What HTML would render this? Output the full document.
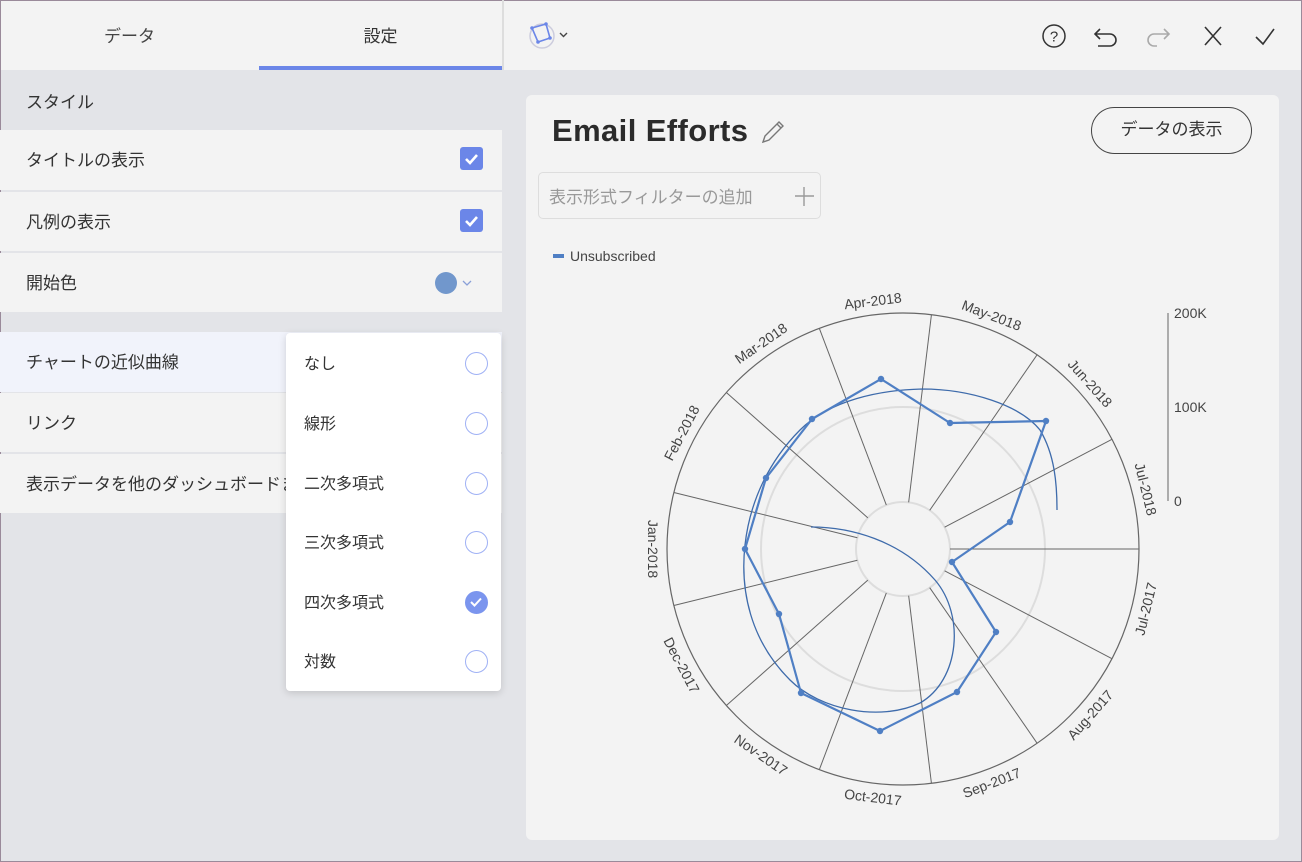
<!DOCTYPE html>
<html><head><meta charset="utf-8"><style>
*{box-sizing:border-box;margin:0;padding:0}
body{width:1302px;height:862px;overflow:hidden;background:#e3e4e8;font-family:"Liberation Sans","Noto Sans CJK JP",sans-serif;color:#333;position:relative}
.abs{position:absolute}
.row{position:absolute;left:0;width:502px;background:#f3f3f3;font-size:17px;padding-left:26px;display:flex;align-items:center;padding-bottom:3px}
.cb{position:absolute;right:19px;width:23px;height:23px;background:#6b86e8;border-radius:3px}
.item{position:absolute;left:0;width:215px;height:60px;display:flex;align-items:center;padding-left:18px;font-size:16px;color:#333;padding-bottom:3px}
.rad{position:absolute;left:179px;top:19px;width:23px;height:23px;border:1.5px solid #9fb1f5;border-radius:50%}
</style></head><body>
<div class="abs" style="left:0;top:0;width:1302px;height:70px;background:#f3f3f3;border-top:1px solid #9a8a9a"></div>
<div class="abs" style="left:0;top:0;width:1px;height:862px;background:#9a8a9a"></div>
<div class="abs" style="left:1301px;top:0;width:1px;height:862px;background:#9a8a9a"></div>
<div class="abs" style="left:0;top:861px;width:1302px;height:1px;background:#9a8a9a"></div>
<div class="abs" style="left:502px;top:0;width:2px;height:70px;background:#ddd"></div>
<div class="abs" style="left:0;top:22px;width:259px;text-align:center;font-size:17px;color:#444">データ</div>
<div class="abs" style="left:259px;top:22px;width:243px;text-align:center;font-size:17px;color:#333">設定</div>
<div class="abs" style="left:259px;top:66px;width:243px;height:4px;background:#6b86e8"></div>

<div class="abs" style="left:26px;top:88px;font-size:17px">スタイル</div>
<div class="row" style="top:130px;height:60px">タイトルの表示<div class="cb"><svg width="23" height="23"><path d="M6 12l4 4 7-8" stroke="#fff" stroke-width="2.6" fill="none"/></svg></div></div>
<div class="row" style="top:192px;height:59px">凡例の表示<div class="cb"><svg width="23" height="23"><path d="M6 12l4 4 7-8" stroke="#fff" stroke-width="2.6" fill="none"/></svg></div></div>
<div class="row" style="top:253px;height:59px">開始色<div class="abs" style="left:435px;top:19px;width:22px;height:22px;border-radius:50%;background:#7197cc"></div><svg class="abs" style="left:461px;top:25px" width="12" height="10"><path d="M2 3l4 4 4-4" stroke="#8aa0d8" fill="none" stroke-width="1.3"/></svg></div>
<div class="row" style="top:332px;height:60px;background:#f1f3fb">チャートの近似曲線</div>
<div class="row" style="top:393px;height:59px">リンク</div>
<div class="row" style="top:454px;height:59px;white-space:nowrap;overflow:hidden">表示データを他のダッシュボードまたはウェブページにリンク</div>

<div class="abs" style="left:286px;top:333px;width:215px;height:358px;background:#fff;border-radius:4px;box-shadow:0 2px 8px rgba(0,0,0,.15)">
<div class="item" style="top:0">なし<div class="rad"></div></div>
<div class="item" style="top:60px">線形<div class="rad"></div></div>
<div class="item" style="top:120px">二次多項式<div class="rad"></div></div>
<div class="item" style="top:179px">三次多項式<div class="rad"></div></div>
<div class="item" style="top:239px">四次多項式<div class="rad" style="background:#7b95ee;border-color:#7b95ee"><svg width="20" height="20" style="position:absolute;left:0;top:0"><path d="M5 10l3.5 3.5 6.5-7" stroke="#fff" stroke-width="2" fill="none"/></svg></div></div>
<div class="item" style="top:298px">対数<div class="rad"></div></div>
</div>

<svg class="abs" style="left:520px;top:14px" width="60" height="42">
<circle cx="22" cy="22" r="12" fill="none" stroke="#ccd" stroke-width="1.5"/>
<path d="M12 14l14-4 4 14-12 4z" fill="none" stroke="#6b86e8" stroke-width="1.6"/>
<circle cx="12" cy="14" r="1.8" fill="#6b86e8"/><circle cx="26" cy="10" r="1.8" fill="#6b86e8"/><circle cx="30" cy="24" r="1.8" fill="#6b86e8"/><circle cx="18" cy="28" r="1.8" fill="#6b86e8"/>
<path d="M40 19l3.5 3.5 3.5-3.5" stroke="#444" fill="none" stroke-width="1.4"/>
</svg>
<svg class="abs" style="left:1030px;top:16px" width="260" height="40">
<circle cx="24" cy="20" r="11" fill="none" stroke="#333" stroke-width="1.5"/>
<text x="24" y="25.5" text-anchor="middle" font-size="15" font-family="Liberation Sans" fill="#333">?</text>
<path d="M70 13l-5 5 5 5M65 18h15a6 6 0 0 1 0 12h-12" stroke="#333" fill="none" stroke-width="1.6"/>
<path d="M134 13l5 5-5 5M139 18h-15a6 6 0 0 0 0 12h3" stroke="#aaa" fill="none" stroke-width="1.6"/>
<path d="M175 11l16 18M191 11l-16 18" stroke="#333" stroke-width="1.6"/>
<path d="M226 21l7 7 11-15" stroke="#333" fill="none" stroke-width="1.6"/>
</svg>

<div class="abs" style="left:526px;top:95px;width:753px;height:745px;background:#f3f3f3;border-radius:6px"></div>
<div class="abs" style="left:552px;top:113px;font-size:31px;font-weight:bold;color:#2b2b2b;letter-spacing:0.4px">Email Efforts</div>
<svg class="abs" style="left:758px;top:116px" width="30" height="30"><path d="M5 26l2-6 14-14 4 4-14 14z M19 8l4 4" stroke="#777" fill="none" stroke-width="1.4"/></svg>
<div class="abs" style="left:1091px;top:107px;width:161px;height:47px;border:1.3px solid #444;border-radius:24px;text-align:center;line-height:44px;font-size:17px;color:#333">データの表示</div>
<div class="abs" style="left:538px;top:172px;width:283px;height:47px;border:1px solid #ddd;border-radius:5px;font-size:17px;color:#999;padding:10px 0 0 10px">表示形式フィルターの追加</div>
<svg class="abs" style="left:792px;top:184px" width="24" height="24"><path d="M12 3v19M3 12h19" stroke="#999" stroke-width="1.4"/></svg>
<div class="abs" style="left:553px;top:254px;width:11px;height:4px;background:#4f7fc4"></div>
<div class="abs" style="left:570px;top:248px;font-size:14px;color:#444">Unsubscribed</div>

<svg class="abs" style="left:0;top:0" width="1302" height="862" font-family="Liberation Sans" font-size="14" fill="#444">
<circle cx="903" cy="549" r="236" fill="none" stroke="#666" stroke-width="1.2"/>
<circle cx="903" cy="549" r="142" fill="none" stroke="#ddd" stroke-width="2"/>
<circle cx="903" cy="549" r="47" fill="none" stroke="#ddd" stroke-width="2"/>
<g stroke="#666" stroke-width="1">
<line x1="950" y1="549" x2="1139" y2="549" transform="rotate(0 903 549)"/>
<line x1="950" y1="549" x2="1139" y2="549" transform="rotate(27.69 903 549)"/>
<line x1="950" y1="549" x2="1139" y2="549" transform="rotate(55.38 903 549)"/>
<line x1="950" y1="549" x2="1139" y2="549" transform="rotate(83.08 903 549)"/>
<line x1="950" y1="549" x2="1139" y2="549" transform="rotate(110.77 903 549)"/>
<line x1="950" y1="549" x2="1139" y2="549" transform="rotate(138.46 903 549)"/>
<line x1="950" y1="549" x2="1139" y2="549" transform="rotate(166.15 903 549)"/>
<line x1="950" y1="549" x2="1139" y2="549" transform="rotate(193.85 903 549)"/>
<line x1="950" y1="549" x2="1139" y2="549" transform="rotate(221.54 903 549)"/>
<line x1="950" y1="549" x2="1139" y2="549" transform="rotate(249.23 903 549)"/>
<line x1="950" y1="549" x2="1139" y2="549" transform="rotate(276.92 903 549)"/>
<line x1="950" y1="549" x2="1139" y2="549" transform="rotate(304.62 903 549)"/>
<line x1="950" y1="549" x2="1139" y2="549" transform="rotate(332.31 903 549)"/>
<line x1="1168" y1="313" x2="1168" y2="501"/>
</g>
<text x="1174" y="318">200K</text><text x="1174" y="412">100K</text><text x="1174" y="506">0</text>
<g text-anchor="middle" dominant-baseline="central">
<text transform="translate(903 549) rotate(13.85) translate(250 0) rotate(-90)">Jul-2017</text>
<text transform="translate(903 549) rotate(41.54) translate(250 0) rotate(-90)">Aug-2017</text>
<text transform="translate(903 549) rotate(69.23) translate(250 0) rotate(-90)">Sep-2017</text>
<text transform="translate(903 549) rotate(96.92) translate(250 0) rotate(-90)">Oct-2017</text>
<text transform="translate(903 549) rotate(124.62) translate(250 0) rotate(-90)">Nov-2017</text>
<text transform="translate(903 549) rotate(152.31) translate(250 0) rotate(-90)">Dec-2017</text>
<text transform="translate(903 549) rotate(180) translate(250 0) rotate(-90)">Jan-2018</text>
<text transform="translate(903 549) rotate(-152.31) translate(250 0) rotate(90)">Feb-2018</text>
<text transform="translate(903 549) rotate(-124.62) translate(250 0) rotate(90)">Mar-2018</text>
<text transform="translate(903 549) rotate(-96.92) translate(250 0) rotate(90)">Apr-2018</text>
<text transform="translate(903 549) rotate(-69.23) translate(250 0) rotate(90)">May-2018</text>
<text transform="translate(903 549) rotate(-41.54) translate(250 0) rotate(90)">Jun-2018</text>
<text transform="translate(903 549) rotate(-13.85) translate(250 0) rotate(90)">Jul-2018</text>
</g>
<path d="M811 527 C850 527 900 540 935 580 C965 615 960 680 920 703 C880 722 820 710 790 680 C750 640 740 590 745 545 C750 500 770 460 800 430 C830 400 880 390 922 389 C970 389 1020 405 1040 430 C1055 455 1057 485 1057 510" fill="none" stroke="#3e6bab" stroke-width="1.3"/>
<polyline points="952,562 996,632 957,692 880,731 801,693 779,614 745,549 766,478 812,419 881,379 950,423 1046,421 1010,522 952,562" fill="none" stroke="#4f7fc4" stroke-width="2.2" stroke-linejoin="round"/>
<g fill="#4f7fc4">
<circle cx="952" cy="562" r="3.2"/><circle cx="996" cy="632" r="3.2"/><circle cx="957" cy="692" r="3.2"/><circle cx="880" cy="731" r="3.2"/><circle cx="801" cy="693" r="3.2"/><circle cx="779" cy="614" r="3.2"/><circle cx="745" cy="549" r="3.2"/><circle cx="766" cy="478" r="3.2"/><circle cx="812" cy="419" r="3.2"/><circle cx="881" cy="379" r="3.2"/><circle cx="950" cy="423" r="3.2"/><circle cx="1046" cy="421" r="3.2"/><circle cx="1010" cy="522" r="3.2"/>
</g>
</svg>
</body></html>
